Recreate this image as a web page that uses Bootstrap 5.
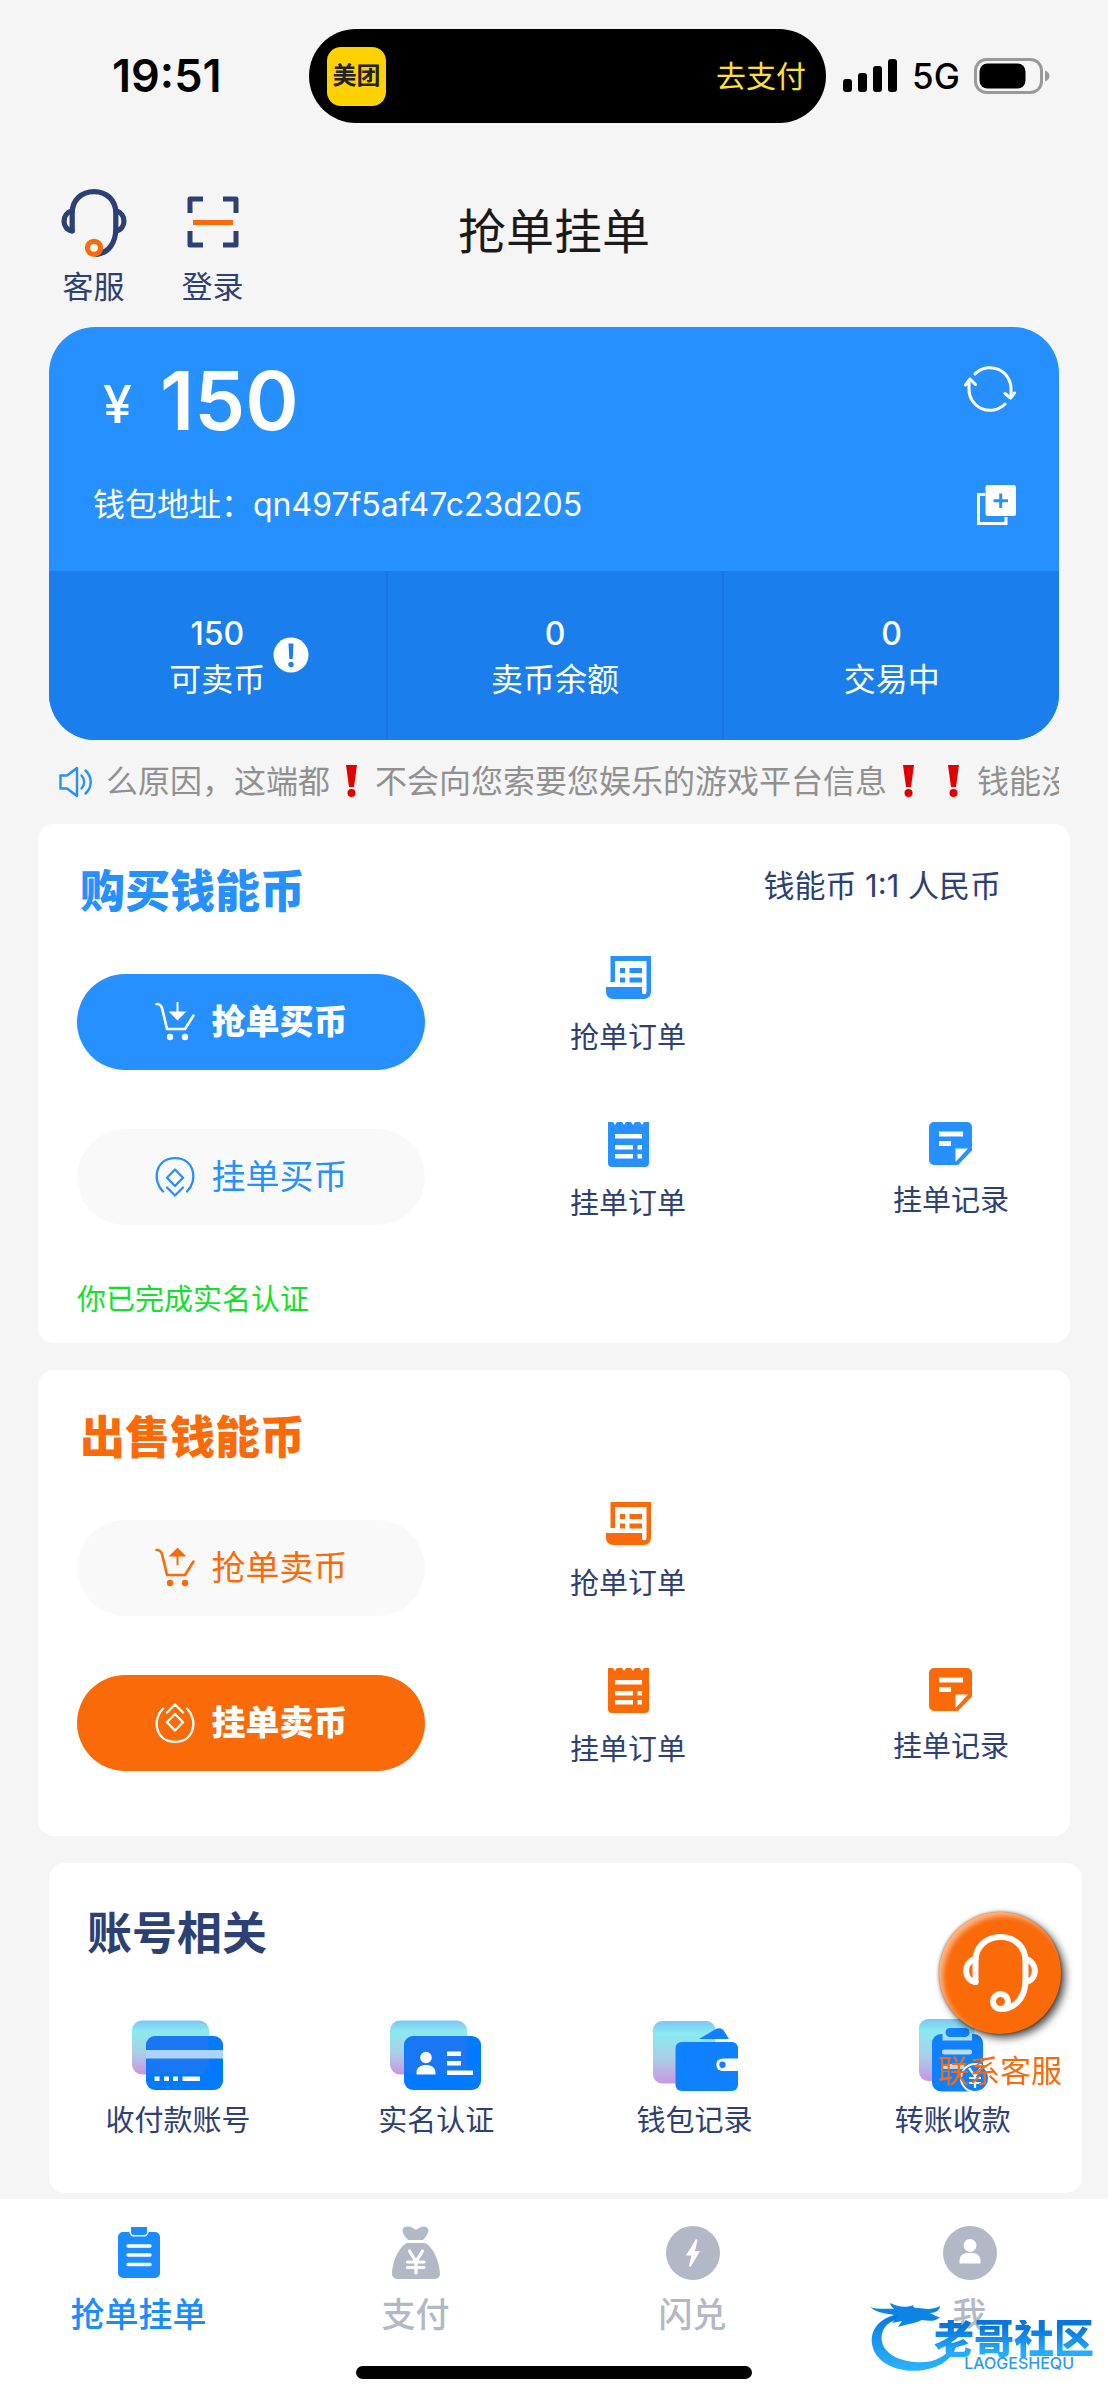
<!DOCTYPE html>
<html lang="zh-CN">
<head>
<meta charset="utf-8">
<meta name="viewport" content="width=device-width, initial-scale=1">
<title>抢单挂单</title>
<link href="https://cdn.jsdelivr.net/npm/bootstrap@5.3.0/dist/css/bootstrap.min.css" rel="stylesheet">
<style>
:root{--blue:#2690ff;--blue-dark:#1a7fec;--orange:#fb6a09;--navy:#2d4073;--muted:#b2b8c5}
body{background:#f5f5f5;color:var(--navy);font-family:Inter,"Noto Sans CJK SC",sans-serif;font-size:29px;line-height:40px}
a{color:inherit;text-decoration:none}
svg{display:block;flex:none}
.c-blue{color:var(--blue)}
.c-orange{color:var(--orange)}

.statusbar{display:grid;grid-template-columns:309fr 517fr 282fr;padding:29px 0 66px;color:#000}
.clock{font-size:45px;font-weight:600;padding-left:112px}
.island{height:94px;border-radius:47px;background:#000;padding:0 20px 0 18px}
.app-logo{width:59px;height:59px;border-radius:14px;background:#ffd100;color:#222;font-size:24px;font-weight:700}
.island-link{color:#ffe033;font-size:30px}
.signals{padding-left:17px;gap:14px;font-size:35px;font-weight:500}

.topbar{display:grid;grid-template-columns:1fr auto 1fr;margin-bottom:24px}
.topbar h1{font-size:48px;line-height:86px;font-weight:400;color:#1a1a1a;margin:0}
.shortcuts{padding-left:34px}
.shortcuts a{width:119px;font-size:31px;line-height:32px;gap:14px}
.headset{--mic:var(--orange)}

.wallet{margin:0 49px;border-radius:46px;overflow:hidden;background:var(--blue);color:#fff}
.wallet-top{padding:26px 43px 46px 44px}
.plain{background:none;border:0;padding:0;color:inherit}
.amount{gap:28px;padding-left:10px;margin-bottom:36px;line-height:96px}
.amount strong{font-size:81px;font-weight:600}
.amount span{font-size:52px;line-height:88px;font-weight:500}
.address{font-size:32px}
.stats{background:var(--blue-dark);display:grid;grid-template-columns:repeat(3,1fr);font-size:32px;line-height:46px;text-align:center}
.stats>div{padding:40px 0 37px}
.stats>div+div{border-left:2px solid #1876dd}
.stats b{display:block;font-weight:500}
.tip{position:absolute;left:calc(100% + 8px);top:-23px}

.notice{margin:0 49px 0 59px;height:84px;gap:14px;font-size:32px;color:#909090}
.notice p{margin:0;overflow:hidden;white-space:nowrap}
.bang{display:inline-block;width:45px;height:32px;vertical-align:-4px}

.panel{margin:0 38px 27px;padding:38px 39px 0;background:#fff;border-radius:16px}
.panel h2{font-size:45px;line-height:60px;font-weight:900;margin:0;padding-left:3px}
.rate{font-size:31px;line-height:48px;padding-right:30px}
.actions{margin-top:34px}
.action-buttons{width:348px;flex:none;padding-top:18px;gap:59px}
.pill{height:96px;border:0;border-radius:48px;gap:17px;font-size:34px;background:#f9f9f9}
.pill.solid{color:#fff;font-weight:900}
.pill.solid.c-blue{background:var(--blue)}
.pill.solid.c-orange{background:var(--orange)}
.records{flex:1;margin-left:145px;padding-right:22px;display:grid;grid-template-columns:auto auto;justify-content:space-between;align-content:start;row-gap:64px}
.records a,.account a{display:flex;flex-direction:column;align-items:center}
.records svg{margin-bottom:16px}
.records a:nth-child(2){grid-area:2/1}
.records a:nth-child(3){grid-area:2/2}
.verified{color:#10e22b;margin:55px 0 0;padding-bottom:23px}
.panel-sell{padding-bottom:65px}

.account{margin:0 26px 6px 49px;padding:41px 0 52px;background:#fff;border-radius:16px}
.account h2{font-size:45px;line-height:60px;font-weight:700;margin:0;padding-left:38px}
.account-grid{display:grid;grid-template-columns:repeat(4,1fr);margin-top:54px}
.account-grid a{gap:7px}

.tabs{background:#fff;padding:27px 0 21px;color:var(--muted);font-size:34px;font-weight:500}
.tabs nav{display:grid;grid-template-columns:repeat(4,1fr)}
.tabs nav a{display:flex;flex-direction:column;align-items:center;gap:15px}
.tabs nav a.active{color:#1a8cff}
.home-bar{width:396px;height:13px;border-radius:7px;background:#000;margin:31px auto 0}

.service{position:fixed;right:46px;bottom:310px;color:var(--orange);font-size:31px;line-height:38px;z-index:5}
.service-disc{width:122px;height:122px;border-radius:50%;background:var(--orange);color:#fff;margin-bottom:18px;box-shadow:4px 4px 8px rgba(0,0,0,.7),0 0 3px rgba(120,60,20,.7),inset 4px 4px 5px rgba(255,255,255,.5)}
.brand{position:absolute;right:14px;bottom:24px;width:224px;height:80px}
.brand svg{position:absolute;left:0;top:0}
.brand-text{position:absolute;right:0;top:24px;text-align:right}
.brand-text b{display:flex;gap:6px;font-size:40px;line-height:38px;font-weight:900;color:transparent}
.brand-text b{background:linear-gradient(#0876da 20%,#25acff 85%);-webkit-background-clip:text;background-clip:text}
.brand-text span{display:block;font-size:16px;line-height:10px;font-weight:500;color:#2a9cf0;padding-right:20px}
</style>
<script src="https://cdn.jsdelivr.net/npm/bootstrap@5.3.0/dist/js/bootstrap.bundle.min.js"></script>
</head>
<body>

<svg width="0" height="0" class="position-absolute" aria-hidden="true">
  <defs>
    <linearGradient id="glass" x1="0" y1="0" x2="0" y2="1"><stop offset="0" stop-color="#7cc6f4"/><stop offset=".2" stop-color="#8aeaf0"/><stop offset=".6" stop-color="#a9cfe6"/><stop offset="1" stop-color="#cc94e2"/></linearGradient>
    <linearGradient id="wave" x1="0" y1="0" x2="0" y2="1"><stop offset="0" stop-color="#0878dc"/><stop offset="1" stop-color="#2ab4ff"/></linearGradient>
    <symbol id="i-headset" viewBox="0 0 75 78"><g fill="none" stroke="currentColor" stroke-width="6" stroke-linecap="round"><path d="M12.500 48V27C12.500 13 23 3 37.500 3S62.500 13 62.500 27V46C62.500 62 54 73 41 75"/><path d="M12.500 25C0 28 0 46 12.500 48M62.500 25C75 28 75 46 62.500 48"/><circle cx="37.500" cy="67.500" r="7.500" style="stroke:var(--mic,currentColor)"/></g></symbol>
    <symbol id="i-roll" viewBox="0 0 45 46"><path fill="currentColor" d="M4.500 0H45V36a7 7 0 0 1-7 7H7a7 7 0 0 1-7-7V31H36V36a2.200 2.200 0 0 0 4.500 0V5H9V26H4.500ZM14 12h5v5h-5ZM23.500 12H36v5H23.500ZM14 21.500h5v5h-5ZM23.500 21.500H36v5H23.500Z"/></symbol>
    <symbol id="i-receipt" viewBox="0 0 41 46"><path fill="currentColor" fill-rule="evenodd" d="M0 0H5l2 3 2-3h5l2 3 2-3h5l2 3 2-3h5l2 3 2-3h5V41a4 4 0 0 1-4 4H4a4 4 0 0 1-4-4ZM7 12v4.500H34V12ZM7 23v4.500H25V23ZM29.500 23v4.500H34V23ZM7 32v4.500H25V32ZM29.500 32v4.500H34V32Z"/></symbol>
    <symbol id="i-note" viewBox="0 0 43 43"><path fill="currentColor" fill-rule="evenodd" d="M5 0H38a5 5 0 0 1 5 5V28.500L29 43H5a5 5 0 0 1-5-5V5A5 5 0 0 1 5 0ZM10 9.500v5H34v-5ZM10 19v5H22v-5ZM26.500 26.500V40L39 26.500Z"/></symbol>
    <symbol id="i-cart" viewBox="0 0 40 40"><path fill="none" stroke="currentColor" stroke-width="2.600" stroke-linejoin="round" stroke-linecap="round" d="M1.500 2C5 2 6 3 7 6L12 27H30L38.500 13.500"/><circle cx="15" cy="35" r="3.200" fill="currentColor"/><circle cx="30" cy="35" r="3.200" fill="currentColor"/></symbol>
    <symbol id="i-gem" viewBox="0 0 40 40"><path fill="none" stroke="currentColor" stroke-width="2.300" stroke-linejoin="round" stroke-linecap="round" d="M8 34.500C-3 24 0 1.200 20 1.200S43 24 32 34.500M20 12.500L28 20.800L20 29L12 20.800ZM12 30.500L20 38.500L28 30.500"/></symbol>
  </defs>
</svg>

<header>
  <div class="statusbar align-items-center">
    <div class="clock">19:51</div>
    <div class="island d-flex align-items-center justify-content-between">
      <span class="app-logo d-flex align-items-center justify-content-center">美团</span>
      <a href="#" class="island-link">去支付</a>
    </div>
    <div class="signals d-flex align-items-center">
      <svg width="55" height="34" fill="#000"><rect y="20" width="9" height="13" rx="3"/><rect x="15" y="14" width="9" height="19" rx="3"/><rect x="30" y="7" width="9" height="26" rx="3"/><rect x="45" width="9" height="33" rx="3"/></svg>
      <span>5G</span>
      <svg width="78" height="36"><rect x="1.500" y="1.500" width="66" height="33" rx="11" fill="none" stroke="#999" stroke-width="3"/><rect x="5.500" y="5.500" width="46" height="25" rx="8"/><path d="M71 12.500c6 2 6 9 0 11Z" fill="#999"/></svg>
    </div>
  </div>
  <div class="topbar">
    <div class="shortcuts d-flex">
      <a href="#" class="headset d-flex flex-column align-items-center"><svg width="66" height="68"><use href="#i-headset"/></svg>客服</a>
      <a href="#" class="d-flex flex-column align-items-center"><svg width="52" height="68" viewBox="0 0 52 68" fill="none" stroke-width="5"><path stroke="currentColor" stroke-linejoin="round" d="M3 24V10H16M36 10H49V24M3 42V56H16M36 56H49V42"/><path stroke="#fb6a09" d="M6 33.500H46"/></svg>登录</a>
    </div>
    <h1>抢单挂单</h1>
  </div>
</header>

<main>
  <section class="wallet">
    <div class="wallet-top">
      <div class="amount d-flex align-items-center">
        <span class="pt-2">¥</span><strong>150</strong>
        <button class="plain ms-auto mb-4 d-flex" type="button" aria-label="刷新"><svg width="52" height="46" viewBox="0 0 52 46" fill="none" stroke="#fff" stroke-width="3" stroke-linecap="round" stroke-linejoin="round"><path d="M11 8A21 21 0 0 1 47 23.500V31M41 38A21 21 0 0 1 5 22.500V14M1.500 19L6 13L11.500 18.500M41 27.500L46.500 32L50.500 27"/></svg></button>
      </div>
      <div class="address d-flex align-items-center justify-content-between">
        <span>钱包地址：qn497f5af47c23d205</span>
        <button class="plain" type="button" aria-label="复制"><svg width="39" height="40" viewBox="0 0 39 40"><path d="M8 9.500H1.500V38.500H29V32" fill="none" stroke="#fff" stroke-width="3"/><rect x="8.500" width="30.500" height="31" rx="2.500" fill="#fff"/><path d="M23.700 8.500V23M16.500 15.800H31" stroke="#2690ff" stroke-width="3"/></svg></button>
      </div>
    </div>
    <div class="stats">
      <div><b>150</b><span class="position-relative">可卖币<svg class="tip" width="36" height="36"><circle cx="18" cy="18" r="17.500" fill="#fff"/><path d="M15.500 6.500h5l-.8 15.500h-3.400Z" fill="#1a7fec"/><circle cx="18" cy="27.500" r="2.700" fill="#1a7fec"/></svg></span></div>
      <div><b>0</b>卖币余额</div>
      <div><b>0</b>交易中</div>
    </div>
  </section>

  <div class="notice d-flex align-items-center">
    <svg width="33" height="32" viewBox="0 0 33 32" fill="none" stroke="#2690ff" stroke-width="2.400" stroke-linejoin="round" stroke-linecap="round"><path d="M1.500 9.500H8L18 2V30L8 22.500H1.500ZM22.500 9.500C26 13 26 19 22.500 22.500M26.500 4.500C33.500 11 33.500 21 26.500 27.500"/></svg>
    <p>么原因，这端都<svg class="bang" viewBox="0 0 45 32"><path d="M16 0h11l-3 22h-5Z" fill="#e00000"/><circle cx="21.500" cy="28" r="4" fill="#e00000"/></svg>不会向您索要您娱乐的游戏平台信息<svg class="bang" viewBox="0 0 45 32"><path d="M16 0h11l-3 22h-5Z" fill="#e00000"/><circle cx="21.500" cy="28" r="4" fill="#e00000"/></svg><svg class="bang" viewBox="0 0 45 32"><path d="M16 0h11l-3 22h-5Z" fill="#e00000"/><circle cx="21.500" cy="28" r="4" fill="#e00000"/></svg>钱能没</p>
  </div>

  <section class="panel">
    <div class="d-flex justify-content-between">
      <h2 class="c-blue">购买钱能币</h2>
      <span class="rate">钱能币 1:1 人民币</span>
    </div>
    <div class="actions d-flex">
      <div class="action-buttons d-flex flex-column">
        <button type="button" class="pill solid c-blue d-flex align-items-center justify-content-center"><svg width="40" height="40"><use href="#i-cart"/><path d="M22.500 0V11M16 10.500H29L22.500 17Z" fill="currentColor" stroke="currentColor" stroke-width="2"/></svg>抢单买币</button>
        <button type="button" class="pill c-blue d-flex align-items-center justify-content-center"><svg width="40" height="40"><use href="#i-gem"/></svg>挂单买币</button>
      </div>
      <div class="records">
        <a href="#"><svg class="c-blue" width="45" height="46"><use href="#i-roll"/></svg>抢单订单</a>
        <a href="#"><svg class="c-blue" width="41" height="46"><use href="#i-receipt"/></svg>挂单订单</a>
        <a href="#"><svg class="c-blue" width="43" height="43"><use href="#i-note"/></svg>挂单记录</a>
      </div>
    </div>
    <p class="verified">你已完成实名认证</p>
  </section>

  <section class="panel panel-sell">
    <h2 class="c-orange">出售钱能币</h2>
    <div class="actions d-flex">
      <div class="action-buttons d-flex flex-column">
        <button type="button" class="pill c-orange d-flex align-items-center justify-content-center"><svg width="40" height="40"><use href="#i-cart"/><path d="M22.500 17V6M16 7.500H29L22.500 1Z" fill="currentColor" stroke="currentColor" stroke-width="2"/></svg>抢单卖币</button>
        <button type="button" class="pill solid c-orange d-flex align-items-center justify-content-center"><svg width="40" height="40"><use href="#i-gem" transform="rotate(180 20 20)"/></svg>挂单卖币</button>
      </div>
      <div class="records">
        <a href="#"><svg class="c-orange" width="45" height="46"><use href="#i-roll"/></svg>抢单订单</a>
        <a href="#"><svg class="c-orange" width="41" height="46"><use href="#i-receipt"/></svg>挂单订单</a>
        <a href="#"><svg class="c-orange" width="43" height="43"><use href="#i-note"/></svg>挂单记录</a>
      </div>
    </div>
  </section>

  <section class="account">
    <h2>账号相关</h2>
    <div class="account-grid">
      <a href="#"><svg width="92" height="76"><rect y="2.500" width="77" height="54" rx="10" fill="url(#glass)"/><rect x="14" y="18" width="77" height="54" rx="9" fill="#007bff"/><path d="M15 27a9 9 0 0 1 8-9H77V47a9 9 0 0 1-9 9H14Z" fill="#2a74ec" opacity=".6"/><path d="M14 32H91v8.500H14Z" fill="#add3fb"/><path d="M22.500 58.500h5v4.500h-5ZM32 58.500h5v4.500h-5ZM41 58.500h5v4.500h-5ZM50.500 58.500H68v4.500H50.500Z" fill="#fff"/></svg>收付款账号</a>
      <a href="#"><svg width="92" height="76"><rect y="2.500" width="77" height="54" rx="10" fill="url(#glass)"/><rect x="14" y="18" width="77" height="54" rx="9" fill="#007bff"/><path d="M15 27a9 9 0 0 1 8-9H77V47a9 9 0 0 1-9 9H14Z" fill="#2a74ec" opacity=".6"/><g fill="#fff"><circle cx="36" cy="39.500" r="5.800"/><path d="M26.500 56.500v-2c0-5 4-7.500 9.500-7.500s9.500 2.500 9.500 7.500v2ZM57 33.500H71V38H57ZM57 43H71v4.500H57ZM57 52.500H83V57H57Z"/></g></svg>实名认证</a>
      <a href="#"><svg width="92" height="76"><rect x="4" y="3" width="62.500" height="62.500" rx="9" fill="url(#glass)"/><path d="M50 21L66 11.500C70 9.500 73 10 75 13L80 21Z" fill="#0f80ff"/><rect x="26.500" y="24" width="62.500" height="49" rx="6" fill="#0f80ff"/><path d="M90 40.500H73.500a6.200 6.200 0 0 0 0 12.500H90Z" fill="#fff"/><circle cx="73.500" cy="46.800" r="3.200" fill="#0f80ff"/></svg>钱包记录</a>
      <a href="#"><svg width="92" height="76"><rect x="12" y="1" width="55.500" height="62" rx="9" fill="url(#glass)"/><rect x="25" y="16" width="51" height="57.500" rx="9" fill="#0f80ff"/><path d="M35.500 15H65V22.500H35.500Z" fill="#a9dff0"/><rect x="38.500" y="10" width="24" height="9" rx="4.500" fill="#0f80ff"/><path d="M37.500 34H62.500M37.500 48.500H55" stroke="#bcdcf6" stroke-width="5" stroke-linecap="round"/><circle cx="68" cy="60" r="14" fill="#0f80ff" stroke="#fff" stroke-width="2"/><path d="M62 50L68 58L74 50M62 60H74M62 65H74M68 58V70" fill="none" stroke="#fff" stroke-width="2.200"/></svg>转账收款</a>
    </div>
  </section>
</main>

<footer class="tabs position-relative">
  <nav>
    <a href="#" class="active"><svg width="44" height="54" viewBox="0 0 44 54"><path d="M6 6H12c1 0 1 4.500 4 4.500H28C31 10.500 31 6 32 6H38a5 5 0 0 1 5 5V47a5 5 0 0 1-5 5H6a5 5 0 0 1-5-5V11A5 5 0 0 1 6 6Z" fill="currentColor"/><path d="M14 1H30V6a3 3 0 0 1-3 3H17a3 3 0 0 1-3-3Z" fill="currentColor"/><path d="M11 20H33M11 29H33M11 38.500H33" stroke="#fff" stroke-width="3.400" stroke-linecap="round"/></svg>抢单挂单</a>
    <a href="#"><svg width="48" height="54" viewBox="0 0 48 54" fill="currentColor"><path d="M16 14C11 9 9 4 12 1.500C16-.5 20 1 24 4C28 1 32-.5 35 1.500C38 4 36 9 31 14ZM15 17H33C42 21 48 38 48 48a5 5 0 0 1-5 5H5a5 5 0 0 1-5-5C0 38 6 21 15 17Z"/><path d="M17.500 25L24 35.500L30.500 25M15.500 36H32M15.500 41.500H32M24 35.500V47" fill="none" stroke="#fff" stroke-width="3.200" stroke-linecap="round"/></svg>支付</a>
    <a href="#"><svg width="54" height="54" viewBox="0 0 54 54"><circle cx="27" cy="27" r="27" fill="currentColor"/><path d="M30 13L20 29.500H25.500L23 40L24.500 41L34 25H29L31.500 14Z" fill="#fff"/></svg>闪兑</a>
    <a href="#"><svg width="54" height="54" viewBox="0 0 54 54"><circle cx="27" cy="27" r="27" fill="currentColor"/><g fill="#fff"><circle cx="27" cy="19.500" r="6.500"/><path d="M16.500 37.500V35C16.500 30 20 27 24 27h6c4 0 7.500 3 7.500 8v2.500Z"/></g></svg>我</a>
  </nav>
  <div class="home-bar"></div>
  <div class="brand">
    <svg width="100" height="80" viewBox="0 0 100 80"><path d="M34 17C10 20 0 33 2 48C5 68 30 78 54 74C72 71 84 62 88 45C76 62 62 68 44 66C22 64 9 52 12 38C14 28 24 22 38 22Z" fill="url(#wave)"/><path d="M0 11C8 14 18 12 24 13C22 11 20 9 20 7C28 11 36 12 44 9C42 11 44 12 48 12C56 13 62 14 70 10C70 14 66 17 60 17C64 19 67 21 70 21C66 26 58 25 52 24C46 27 38 28 28 31L32 25L22 27L28 20C18 17 8 18 0 11Z" fill="#0b84e6"/></svg>
    <div class="brand-text"><b>老哥社区</b><span>LAOGESHEQU</span></div>
  </div>
</footer>

<a href="#" class="service d-flex flex-column align-items-center">
  <span class="service-disc d-flex align-items-center justify-content-center"><svg width="75" height="78"><use href="#i-headset"/></svg></span>
  联系客服
</a>

</body>
</html>
